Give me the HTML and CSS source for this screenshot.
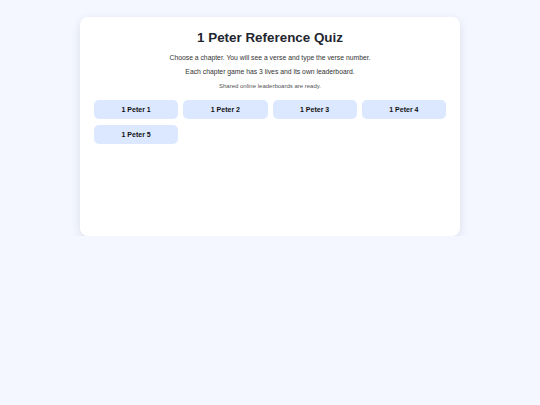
FILE: index.html
```html
<!DOCTYPE html>
<html lang="en">
<head>
    <meta charset="UTF-8">
    <meta name="viewport" content="width=device-width, initial-scale=1.0">
    <title>1 Peter Reference Quiz</title>
    <link rel="stylesheet" href="styles.css">
</head>
<body>
    <div class="card">
        <h1>1 Peter Reference Quiz</h1>
        <p class="intro">Choose a chapter. You will see a verse and type the verse number.</p>
        <p class="intro">Each chapter game has 3 lives and its own leaderboard.</p>
        <p class="status">Shared online leaderboards are ready.</p>
        <div class="chapters">
            <button class="chapter">1 Peter 1</button>
            <button class="chapter">1 Peter 2</button>
            <button class="chapter">1 Peter 3</button>
            <button class="chapter">1 Peter 4</button>
            <button class="chapter">1 Peter 5</button>
        </div>
    </div>
</body>
</html>
```

FILE: styles.css
```css
body {
    margin: 0;
    font-family: "Liberation Sans", Arial, sans-serif;
    background-color: #f4f7ff;
    color: #222;
}
.card {
    box-sizing: border-box;
    width: 380px;
    min-height: 219px;
    margin: 17px auto 0;
    padding: 12px 14px 14px;
    background: #fff;
    border-radius: 8px;
    box-shadow: 0 3px 10px rgba(40, 50, 90, 0.12);
    text-align: center;
}
.card h1 {
    margin: 0 0 6px;
    font-size: 13.4px;
    line-height: 18px;
    color: #1f2630;
}
.intro {
    margin: 0 0 4px;
    font-size: 6.8px;
    line-height: 10px;
    color: #333;
}
.status {
    margin: 0 0 9px;
    font-size: 6px;
    line-height: 10px;
    color: #555;
}
.chapters {
    display: grid;
    grid-template-columns: repeat(4, 1fr);
    gap: 6px 5px;
}
.chapter {
    height: 19px;
    padding: 0;
    border: none;
    border-radius: 5px;
    background-color: #dbe8ff;
    color: #111;
    font-family: inherit;
    font-size: 7px;
    font-weight: bold;
    cursor: pointer;
}
```
